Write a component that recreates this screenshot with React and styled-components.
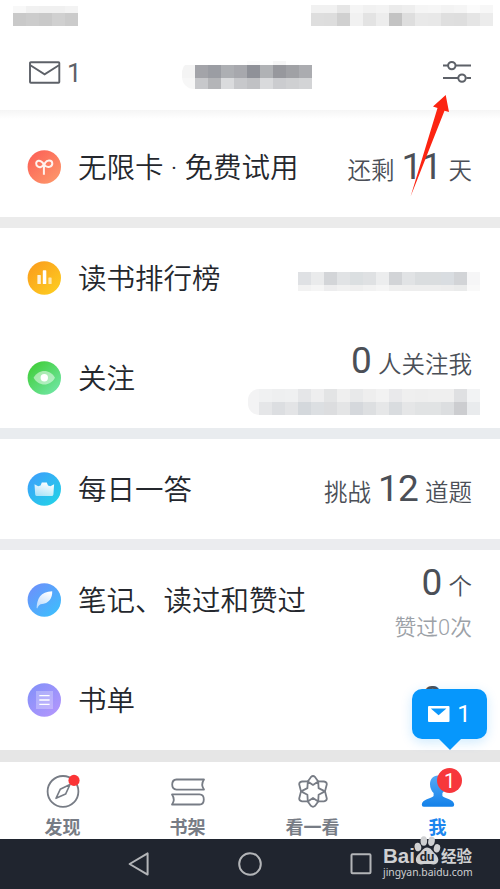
import React from 'react'
import styled, { createGlobalStyle, css } from 'styled-components'

const dark = '#4b4f57'

const statusLeft = [
  { h: 7, cells: ['#f8f8f8', '#f1f1f1', '#f0f0f0', '#f0f0f0', '#f3f3f3'] },
  { h: 13, cells: ['#c9c9c9', '#cccccc', '#c9c9c9', '#d0d0d0', '#cbcbcb'] },
]
const statusRight = [
  { h: 8, cells: ['#f1f1f1', '#f1f1f1', '#e6e6e6', '#f5f5f5', '#f1f1f1', '#f3f3f3', '#ebebeb', '#eeeeee', '#f5f5f5', '#f6f6f6', '#f3f3f3', '#f5f5f5', '#fbfbfb', '#f7f7f7'] },
  { h: 13, cells: ['#dedede', '#dddddd', '#d0d0d0', '#f1f1f1', '#e3e3e3', '#ededed', '#c3c3c3', '#dedede', '#e9e9e9', '#e8e8e8', '#dfdfdf', '#dedede', '#e5e5e5', '#ececec'] },
]
const nickname = [
  { h: 4, cells: ['#ffffff', '#ffffff', '#ffffff', '#ffffff', '#ffffff', '#fbfbfb', '#fefefe', '#f6f6f6', '#fefefe', '#ffffff'] },
  { h: 13, cells: ['#f4f4f4', '#a3a4a9', '#9b9da3', '#adafb3', '#a7a8ad', '#8f9198', '#b0b2b5', '#97989d', '#a0a1a5', '#abacb0'] },
  { h: 11, cells: ['#f7f7f7', '#c7c8cb', '#b4b5b8', '#dadbdd', '#c7c8cb', '#c0c1c4', '#d9dadc', '#cbcccf', '#cfd0d2', '#d3d4d6'] },
]
const ranking = [
  { h: 13, cells: ['#dfe1e4', '#eaebec', '#d3d5d8', '#e1e3e5', '#dbdfe1', '#dfe1e3', '#ecedee', '#d2d4d7', '#e1e3e5', '#dadddf', '#dadddf', '#d9dde1', '#d2d4d7', '#f6f6f7'] },
  { h: 6, cells: ['#f2f2f2', '#f5f5f5', '#ededee', '#f1f1f1', '#efefef', '#f2f2f2', '#f5f5f5', '#efefef', '#eeeeee', '#eeeeee', '#eeeeee', '#ededed', '#eaebeb', '#f9f9f9'] },
]
const follower = [
  { h: 13, cells: ['#f0f1f2', '#eeeff0', '#eff0f1', '#e5e6e8', '#eeeeef', '#e3e4e5', '#efefef', '#e8e9ea', '#eeeeee', '#f2f2f2', '#e9e9eb', '#efefef', '#eeeeee', '#efefef', '#efefef', '#dfe0e2', '#f2f3f4'] },
  { h: 13, cells: ['#e5e6e8', '#dcdee1', '#e3e4e6', '#d4d8dc', '#dcdfe2', '#dcdddf', '#e4e5e6', '#d5d8dc', '#dddfe1', '#e6e7e8', '#d9dcdf', '#e5e6e7', '#e1e3e4', '#e1e3e4', '#dcdee0', '#cccdd0', '#e9ebed'] },
]

function Mosaic({ rows, radius }) {
  return (
    <MosaicBox $radius={radius}>
      {rows.map((row, i) => (
        <MosaicRow key={i} $h={row.h}>
          {row.cells.map((c, j) => <Cell key={j} $tone={c} />)}
        </MosaicRow>
      ))}
    </MosaicBox>
  )
}

function RoundIcon({ id, from, to, children }) {
  return (
    <svg width="34" height="34" viewBox="0 0 34 34" fill="none">
      <defs>
        <linearGradient id={id} x1="0.15" y1="0.1" x2="0.85" y2="0.9">
          <stop offset="0" stopColor={from} />
          <stop offset="1" stopColor={to} />
        </linearGradient>
        <linearGradient id={id + 'Fade'} x1="0.7" y1="0" x2="0.3" y2="1">
          <stop offset="0" stopColor="#fff" />
          <stop offset="1" stopColor="#fff" stopOpacity="0.6" />
        </linearGradient>
      </defs>
      <circle cx="17.3" cy="17" r="16.7" fill={`url(#${id})`} />
      {children}
    </svg>
  )
}

const CardIcon = () => (
  <RoundIcon id="card" from="#fc6458" to="#fd9469">
    <path d="M16.4 14.6C15 17.4 12.8 17.6 11 16.6C8.4 15.2 8.6 11.4 11.4 10.8C14.4 10.2 16 13 17.6 15C19 16.8 20.4 17.4 22.4 16.9C26.4 15.8 26.2 10.9 22.2 10.6C18.6 10.4 16.9 14 16.9 18V24.8" stroke="#fff2ed" strokeWidth="2" />
  </RoundIcon>
)
const RankIcon = () => (
  <RoundIcon id="rank" from="#fba01d" to="#fdca20">
    <rect x="10.4" y="14" width="3.4" height="9" rx=".6" fill="#fff" opacity=".85" />
    <rect x="15.8" y="9.3" width="3.5" height="13.7" rx=".6" fill="#fff" />
    <rect x="21.4" y="16.4" width="3.2" height="6.6" rx=".6" fill="#fff" opacity=".65" />
  </RoundIcon>
)
const EyeIcon = () => (
  <RoundIcon id="eye" from="#43cf3d" to="#6ee5a0">
    <path d="M6.6 16.8C11.3 7.8 23.3 7.8 28 16.8C23.3 25.8 11.3 25.8 6.6 16.8Z" fill="#fff" opacity=".5" />
    <circle cx="17.3" cy="16.8" r="3.7" fill="#fff" />
  </RoundIcon>
)
const CrownIcon = () => (
  <RoundIcon id="crown" from="#3ba2fa" to="#24cfe8">
    <path d="M7.5 12.2L11.2 14.3L13.6 13.4L14.8 10.4H19.8L21 13.4L23.4 14.3L27.1 12.2L26.4 22.4Q26.2 24 24.6 24H10Q8.4 24 8.2 22.4Z" fill="url(#crownFade)" />
  </RoundIcon>
)
const FeatherIcon = () => (
  <RoundIcon id="feather" from="#6a93fb" to="#3fbcfd">
    <path d="M9.6 25C9.9 16 13.4 8.4 25.2 8.2C25.6 14.5 22.4 20.7 13.6 21.3C12 22.2 10.9 23.6 10.2 25.6Z" fill="url(#featherFade)" />
  </RoundIcon>
)
const ListIcon = () => (
  <RoundIcon id="list" from="#8791f9" to="#b096fc">
    <rect x="9" y="8" width="17" height="18" fill="#fff" opacity=".27" />
    <path d="M12.3 12.6H22.6M12.3 17H22.6M12.3 21.4H22.6" stroke="#fff" strokeWidth="1.4" />
  </RoundIcon>
)

const CompassIcon = () => (
  <svg width="36" height="36" viewBox="0 0 36 36" fill="none" stroke="#777c85" strokeWidth="1.8">
    <circle cx="18" cy="18.4" r="15.4" />
    <path d="M11 25.3L15.2 16.3L25 11.5L20.6 21.1ZM11 25.3L20.6 21.1" strokeWidth="1.6" strokeLinejoin="round" />
    <circle cx="29" cy="7.4" r="5.6" fill="#fb3436" stroke="none" />
  </svg>
)
const BooksIcon = () => (
  <svg width="36" height="36" viewBox="0 0 36 36" fill="none" stroke="#777c85" strokeWidth="1.8" strokeLinejoin="round">
    <path d="M34 6.5H6.5Q2.2 6.7 2.2 11.6Q2.2 16.4 6.5 16.6H34Q30.5 11.5 34 6.5Z" />
    <path d="M2 21.4H29.5Q33.8 21.6 33.8 26.4Q33.8 31.3 29.5 31.5H2Q5.5 26.4 2 21.4Z" />
  </svg>
)
const FlowerIcon = () => (
  <svg width="36" height="36" viewBox="0 0 36 36" fill="none" stroke="#777c85" strokeWidth="1.8" strokeLinejoin="round">
    <path d="M12.8 8.4L16 3.9Q18 2.2 20 3.9L23.2 8.4L29 8.5Q31.8 8.9 31.8 11.3L30 18.4L31.8 25.5Q31.8 27.9 29 28.3L23.2 28.4L20 32.9Q18 34.6 16 32.9L12.8 28.4L7 28.3Q4.2 27.9 4.2 25.5L6 18.4L4.2 11.3Q4.2 8.9 7 8.5Z" />
    <path d="M18 11.9L23.2 8.4L23.6 15.1L30 18.4L23.6 21.7L23.2 28.4L18 24.9L12.8 28.4L12.4 21.7L6 18.4L12.4 15.1L12.8 8.4Z" />
  </svg>
)
const PersonIcon = () => (
  <svg width="36" height="36" viewBox="0 0 36 36">
    <defs>
      <linearGradient id="person" x1="0" y1="0" x2="0" y2="1">
        <stop offset="0" stopColor="#53a9f7" />
        <stop offset="1" stopColor="#1381e9" />
      </linearGradient>
    </defs>
    <path d="M18 2.6C23 2.6 26 6.4 26 11.3C26 15 24.4 18.2 22.4 20.1V23C25 26 33.9 26 34.2 31.5Q34.3 33.8 32.2 33.8H3.8Q1.7 33.8 1.8 31.5C2.1 26 11 26 13.6 23V20.1C11.6 18.2 10 15 10 11.3C10 6.4 13 2.6 18 2.6Z" fill="url(#person)" />
  </svg>
)

function Value({ before, num, after }) {
  return (
    <ValueLine>
      {before && <span>{before}</span>}
      <Num $alone={!after}>{num}</Num>
      {after && <span>{after}</span>}
    </ValueLine>
  )
}

function App() {
  return (
    <Phone>
      <GlobalStyle />
      <TopArea>
        <StatusBar>
          <Mosaic rows={statusLeft} />
          <Mosaic rows={statusRight} />
        </StatusBar>
        <Header>
          <Mail>
            <svg width="32" height="24" viewBox="0 0 32 24" fill="none" stroke="#5d6168" strokeWidth="1.9">
              <rect x="1" y="1.2" width="29.3" height="20.6" rx=".8" />
              <path d="M1.4 4.2L15.6 13.4L29.9 4.2" />
            </svg>
            <span>1</span>
          </Mail>
          <Nickname><Mosaic rows={nickname} radius="12px 0 0 12px" /></Nickname>
          <svg width="28" height="24" viewBox="0 0 28 24" fill="none" stroke="#5d6168" strokeWidth="2">
            <path d="M0 5.6H5M13 5.6H28M0 18.1H15.3M23.3 18.1H28" />
            <circle cx="8.8" cy="5.6" r="3.7" />
            <circle cx="19" cy="18.1" r="3.7" />
          </svg>
        </Header>
      </TopArea>

      <Group $first>
        <Row>
          <CardIcon />
          <Title>无限卡 · 免费试用</Title>
          <Value before="还剩" num="11" after="天" />
        </Row>
      </Group>
      <Divider $tone="#ebebeb" />
      <Group>
        <Row>
          <RankIcon />
          <Title>读书排行榜</Title>
          <MosaicSlot $top={7}><Mosaic rows={ranking} /></MosaicSlot>
        </Row>
        <Row>
          <EyeIcon />
          <Title>关注</Title>
          <Stack>
            <Value num="0" after="人关注我" />
            <MosaicSlot $top={6}><Tip /><Mosaic rows={follower} /></MosaicSlot>
          </Stack>
        </Row>
      </Group>
      <Divider $tone="#e9ecef" />
      <Group>
        <Row>
          <CrownIcon />
          <Title>每日一答</Title>
          <Value before="挑战" num="12" after="道题" />
        </Row>
      </Group>
      <Divider $tone="#ebecef" />
      <Group>
        <Row>
          <FeatherIcon />
          <Title>笔记、读过和赞过</Title>
          <Stack>
            <Value num="0" after="个" />
            <Sub>赞过0次</Sub>
          </Stack>
        </Row>
        <Row>
          <ListIcon />
          <Title>书单</Title>
          <Value num="0" />
        </Row>
      </Group>
      <Divider $tone="#e6e6e6" $last />

      <TabBar>
        <Tab><CompassIcon /><span>发现</span></Tab>
        <Tab><BooksIcon /><span>书架</span></Tab>
        <Tab><FlowerIcon /><span>看一看</span></Tab>
        <Tab $active><PersonIcon /><span>我</span><Badge>1</Badge></Tab>
      </TabBar>

      <NavBar>
        <svg width="22" height="26" viewBox="0 0 22 26"><path d="M1.6 13L19.6 2.4V23.6Z" /></svg>
        <svg width="26" height="26" viewBox="0 0 26 26"><circle cx="13" cy="13" r="10.8" /></svg>
        <svg width="22" height="26" viewBox="0 0 22 26"><rect x="1.5" y="3.3" width="19" height="19" rx="1" /></svg>
      </NavBar>

      <Bubble>
        <svg width="22" height="16" viewBox="0 0 22 16">
          <rect width="21.5" height="16" rx="1" fill="#fff" />
          <path d="M2.8 2.5H18.4L10.6 9.3Z" fill="#0a97fb" />
        </svg>
        <span>1</span>
      </Bubble>

      <Arrow width="42" height="104" viewBox="0 0 42 104">
        <path d="M36.7 1L24 12.5L28.5 14L1.6 102.5L35.5 16.7L40 18Z" fill="#fc2411" />
      </Arrow>

      <Watermark>
        <Brand>
          <b>Bai</b>
          <svg width="27" height="29" viewBox="0 0 27 29">
            <g fill="#cfd0d2">
              <ellipse cx="3.9" cy="11" rx="3.3" ry="4.3" transform="rotate(-12 3.9 11)" />
              <ellipse cx="9.8" cy="5" rx="3.3" ry="4.8" />
              <ellipse cx="17.5" cy="5.3" rx="3.3" ry="4.7" transform="rotate(10 17.5 5.3)" />
              <ellipse cx="23" cy="12.3" rx="3.2" ry="4.2" transform="rotate(14 23 12.3)" />
              <path d="M13 11.5C17 11.5 18.2 15.3 21 17.7C27 23 24 28.5 19.5 28.4C15.3 28 11 28 7 28.4C1.2 28.5 .2 22 4.8 18C8 15.5 9.2 11.5 13 11.5Z" />
            </g>
            <text x="13" y="25.2" textAnchor="middle" fontSize="13" fontWeight="700" fontFamily="Roboto, sans-serif" fill="#22262f">du</text>
          </svg>
          <strong>经验</strong>
        </Brand>
        <Site>jingyan.baidu.com</Site>
      </Watermark>
    </Phone>
  )
}

export default App

const GlobalStyle = createGlobalStyle`
*{
  box-sizing:border-box;
}
body{
  margin:0;
  background:#fff;
}
svg{
  display:block;
  flex:none;
}
`

const Phone = styled.div`
position:relative;
width:500px;
height:889px;
overflow:hidden;
display:flex;
flex-direction:column;
background:#fff;
font-family:Roboto, "Noto Sans CJK SC", sans-serif;
`

const TopArea = styled.div`
height:110px;
flex:none;
`

const StatusBar = styled.div`
height:36px;
padding:5px 7px 10px 13px;
display:flex;
justify-content:space-between;
align-items:flex-end;
`

const Header = styled.div`
height:74px;
padding:0 29px 2px 29px;
display:grid;
grid-template-columns:153px 1fr auto;
align-items:center;
`

const Mail = styled.div`
display:flex;
align-items:center;
gap:6px;
padding-top:2px;
font-size:26px;
line-height:28px;
color:#5d6168;
`

const Nickname = styled.div`
padding-top:5px;
`

const MosaicBox = styled.div`
display:flex;
flex-direction:column;
overflow:hidden;
border-radius:${p => p.$radius || 0};
`

const MosaicRow = styled.div`
display:flex;
height:${p => p.$h}px;
`

const Cell = styled.div`
width:13px;
background:${p => p.$tone};
`

const MosaicSlot = styled.div`
display:flex;
margin-top:${p => p.$top}px;
margin-right:-8px;
`

const Tip = styled.div`
width:11px;
border-radius:12px 0 0 12px;
background:#f3f3f4;
`

const Group = styled.div`
flex:none;
${p => p.$first && css`
padding-top:7px;
background:linear-gradient(#f5f5f5, #fff 9px);
`}
`

const Row = styled.div`
height:100px;
padding:0 28px 0 27px;
display:flex;
align-items:center;
`

const Title = styled.div`
flex:1;
margin:4px 0 0 17px;
font-size:28.5px;
font-weight:350;
line-height:40px;
white-space:nowrap;
color:#24272d;
`

const ValueLine = styled.div`
display:flex;
align-items:baseline;
gap:7px;
height:44px;
font-size:23.5px;
font-weight:350;
line-height:44px;
white-space:nowrap;
color:${dark};
`

const Num = styled.span`
font-size:37px;
font-weight:400;
letter-spacing:-0.8px;
margin-right:${p => (p.$alone ? 30 : 0)}px;
`

const Stack = styled.div`
height:100px;
padding-top:11px;
display:flex;
flex-direction:column;
align-items:flex-end;
`

const Sub = styled.div`
margin-top:8px;
font-size:21.8px;
font-weight:350;
line-height:30px;
color:#9ca1a7;
`

const Divider = styled.div`
flex:none;
height:${p => (p.$last ? 12 : 11)}px;
background:${p => p.$tone};
`

const TabBar = styled.div`
height:77px;
flex:none;
display:grid;
grid-template-columns:repeat(4, 1fr);
background:#fff;
`

const Tab = styled.div`
position:relative;
padding-top:11px;
display:flex;
flex-direction:column;
align-items:center;
font-size:18px;
font-weight:700;
line-height:26px;
color:${p => (p.$active ? '#1b86ee' : '#777c85')};

span{
  margin-top:6px;
}
`

const Badge = styled.div`
position:absolute;
left:62px;
top:6px;
width:25px;
height:25px;
border-radius:50%;
background:#f7373b;
color:#fff;
font-size:20px;
font-weight:400;
line-height:26px;
text-align:center;
`

const NavBar = styled.div`
height:50px;
flex:none;
display:flex;
justify-content:center;
align-items:center;
gap:87px;
background:#20252f;

svg{
  fill:none;
  stroke:#b3b5b8;
  stroke-width:2;
  stroke-linejoin:round;
}
`

const Bubble = styled.div`
position:absolute;
left:412px;
top:689px;
width:75px;
height:50px;
border-radius:10px;
display:flex;
justify-content:center;
align-items:center;
gap:7px;
background:#0697fc;
box-shadow:0 3px 12px rgba(6,151,252,0.2);
color:#fff;
font-size:24px;

&::after{
  content:'';
  position:absolute;
  left:27px;
  top:50px;
  border:11px solid transparent;
  border-top-color:#0697fc;
  border-bottom:0;
}
`

const Arrow = styled.svg`
position:absolute;
left:409px;
top:94px;
`

const Watermark = styled.div`
position:absolute;
left:383px;
top:836px;
color:#cfd0d2;
`

const Brand = styled.div`
display:flex;
align-items:flex-end;
height:29px;

b{
  width:31px;
  font-family:"Liberation Sans", sans-serif;
  font-size:20.5px;
  line-height:19px;
}
strong{
  font-size:15.5px;
  line-height:16px;
}
`

const Site = styled.div`
font-family:"Noto Sans", sans-serif;
font-size:10.35px;
line-height:15px;
`
